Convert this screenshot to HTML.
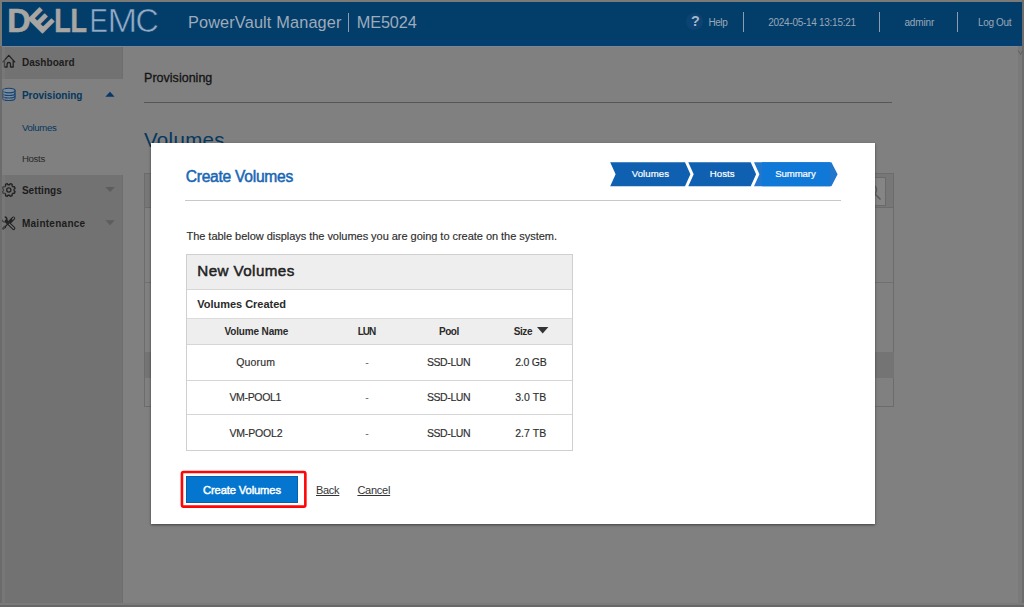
<!DOCTYPE html>
<html lang="en">
<head>
<meta charset="utf-8">
<title>PowerVault Manager - Create Volumes</title>
<style>
*{box-sizing:border-box;margin:0;padding:0}
html,body{width:1024px;height:607px;overflow:hidden;background:#808080;font-family:"Liberation Sans",sans-serif;}
body{position:relative}
.a{position:absolute}
.t{position:absolute;white-space:nowrap;line-height:1}
</style>
</head>
<body>
<!-- header bar -->
<div class="a" style="left:0;top:0;width:1024px;height:46px;background:#033e6a"></div>

<div class="a" style="left:0;top:40px;width:1024px;height:6px;background:#033f70"></div>
<!-- sidebar -->
<div class="a" style="left:0;top:46px;width:123px;height:561px;background:#727272"></div>
<div class="a" style="left:0;top:79px;width:123px;height:96px;background:#808080"></div>
<div class="a" style="left:122px;top:46px;width:1px;height:33px;background:#6e6e6e"></div>
<div class="a" style="left:122px;top:175px;width:1px;height:432px;background:#6e6e6e"></div>

<!-- page content behind the dialog -->
<div class="a" style="left:144px;top:102px;width:748px;height:1px;background:#565656"></div>
<div class="a" style="left:144px;top:173px;width:750px;height:234px;border:1px solid #6c6c6c"></div>
<div class="a" style="left:145px;top:174px;width:748px;height:34px;background:#777;border-bottom:1px solid #6c6c6c"></div>
<div class="a" style="left:145px;top:282px;width:748px;height:1px;background:#707070"></div>
<div class="a" style="left:145px;top:352px;width:749px;height:26px;background:#747474"></div>
<div class="a" style="left:858px;top:177px;width:28px;height:29px;background:#858585;border:1px solid #6a6a6a"></div>
<svg class="a" style="left:862px;top:181px" width="22" height="22" viewBox="0 0 22 22"><circle cx="9" cy="9" r="5.5" fill="none" stroke="#5c5c5c" stroke-width="1.4"/><path d="M13 13 L18.5 18.5" stroke="#5c5c5c" stroke-width="1.6"/></svg>

<!-- logo -->
<svg class="a" style="left:0;top:0" width="170" height="46" viewBox="0 0 170 46" font-family="Liberation Sans, sans-serif">
 <text font-weight="bold" font-size="32.4" fill="#a8a6a3" stroke="#a8a6a3" stroke-width="0.6"><tspan x="7.3" y="32">D</tspan><tspan x="41.1" y="34.0" rotate="-45" font-size="28.3" stroke-width="1.4">E</tspan><tspan x="54.3" y="32" rotate="0" textLength="16.43" lengthAdjust="spacingAndGlyphs">L</tspan><tspan x="70.6" y="32" textLength="16.43" lengthAdjust="spacingAndGlyphs">L</tspan></text>
 <text font-size="33.6" fill="#94abc7" stroke="#033e6a" stroke-width="0.6"><tspan x="89.4" y="32.3" textLength="18.38" lengthAdjust="spacingAndGlyphs">E</tspan><tspan x="107.6" y="32.3" textLength="29.67" lengthAdjust="spacingAndGlyphs">M</tspan><tspan x="135.6" y="32.3" textLength="23.29" lengthAdjust="spacingAndGlyphs">C</tspan></text>
</svg>
<!-- header dividers and help badge -->
<div class="a" style="left:348px;top:13px;width:1px;height:19px;background:#8d9cae"></div>
<div class="a" style="left:743px;top:12px;width:1px;height:20px;background:#8d9cae"></div>
<div class="a" style="left:879px;top:12px;width:1px;height:20px;background:#8d9cae"></div>
<div class="a" style="left:957px;top:12px;width:1px;height:20px;background:#8d9cae"></div>
<div class="a" style="left:686px;top:13px;width:17px;height:17px;border-radius:50%;background:#0d4373"></div>
<!-- sidebar icons -->
<svg class="a" style="left:0;top:46px" width="123" height="200" viewBox="0 46 123 200" fill="none" stroke-linecap="round" stroke-linejoin="round">
  <g stroke="#222" stroke-width="1.3">
    <path d="M2.9 61.9 L8.8 55.4 L14.7 61.9"/>
    <path d="M4.4 60.8 V67 H7.1 V64.2 a1.7 1.7 0 0 1 3.4 0 V67 H13.2 V60.8"/>
  </g>
  <g stroke="#174572" stroke-width="1.15" fill="#7f8c9d">
    <path d="M2.6 90.6 V98.2 a6.2 2.3 0 0 0 12.4 0 V90.6"/>
    <ellipse cx="8.8" cy="90.6" rx="6.2" ry="2.3"/>
    <path d="M2.6 93.2 a6.2 2.3 0 0 0 12.4 0" fill="none"/>
    <path d="M2.6 95.7 a6.2 2.3 0 0 0 12.4 0" fill="none"/>
  </g>
  <polygon points="105.4,96.7 114.6,96.7 110,91.8" fill="#06376a" stroke="none"/>
  <g stroke="#222" stroke-width="1.3">
    <path d="M15.12 191.52 L14.34 193.40 L13.04 193.18 L11.98 194.24 L12.20 195.54 L10.32 196.32 L9.55 195.25 L8.05 195.25 L7.28 196.32 L5.40 195.54 L5.62 194.24 L4.56 193.18 L3.26 193.40 L2.48 191.52 L3.55 190.75 L3.55 189.25 L2.48 188.48 L3.26 186.60 L4.56 186.82 L5.62 185.76 L5.40 184.46 L7.28 183.68 L8.05 184.75 L9.55 184.75 L10.32 183.68 L12.20 184.46 L11.98 185.76 L13.04 186.82 L14.34 186.60 L15.12 188.48 L14.05 189.25 L14.05 190.75 Z"/>
    <circle cx="8.8" cy="190" r="2.1"/>
  </g>
  <polygon points="105.4,187 114.8,187 110.1,192" fill="#5d5d5d" stroke="none"/>
  <g stroke="#242424">
    <path d="M7.4 222.2 L13.6 228.3" stroke-width="3.5"/>
    <path d="M7.4 222.2 L13.6 228.3" stroke="#747474" stroke-width="1.2"/>
    <path d="M5.1 217.0 A2.5 2.5 0 1 1 2.0 220.1" stroke-width="1.5"/>
    <path d="M6.0 221.0 L7.2 222.2" stroke-width="2.6"/>
    <path d="M13.4 218.3 L10.3 221.4" stroke-width="3.6"/>
    <path d="M13.7 218.0 L12.6 219.1" stroke="#7a7a7a" stroke-width="1.1"/>
    <path d="M9.6 222.2 L4.2 227.6" stroke-width="1.3"/>
    <path d="M4.4 226.2 L5.6 227.4 L3.2 229.3 L2.5 228.6 Z" fill="#242424" stroke-width="1.1"/>
  </g>
  <polygon points="105.4,220.2 114.8,220.2 110.1,225.2" fill="#5d5d5d" stroke="none"/>
</svg>

<div class="a" style="left:2px;top:46px;width:1020px;height:1px;background:#7f8792"></div>
<div class="t" style="left:187.9px;top:14px;font-size:16.3px;color:#9eabbb;letter-spacing:0.162px;">PowerVault Manager</div>
<div class="t" style="left:356.8px;top:14px;font-size:16.3px;color:#9eabbb;letter-spacing:-0.151px;">ME5024</div>
<div class="t" style="left:691.0px;top:14px;font-size:14.3px;font-weight:bold;color:#a9b7c8;letter-spacing:0.000px;">?</div>
<div class="t" style="left:708.5px;top:18px;font-size:10px;color:#99a7b7;letter-spacing:-0.459px;">Help</div>
<div class="t" style="left:768.3px;top:18px;font-size:10px;color:#99a7b7;letter-spacing:-0.287px;">2024-05-14 13:15:21</div>
<div class="t" style="left:904.4px;top:18px;font-size:10px;color:#99a7b7;letter-spacing:-0.136px;">adminr</div>
<div class="t" style="left:978.0px;top:18px;font-size:10px;color:#99a7b7;letter-spacing:-0.349px;">Log Out</div>
<div class="t" style="left:21.9px;top:58px;font-size:10px;font-weight:bold;color:#1c1c1c;letter-spacing:0.046px;">Dashboard</div>
<div class="t" style="left:21.9px;top:91px;font-size:10px;font-weight:bold;color:#05375f;letter-spacing:-0.006px;">Provisioning</div>
<div class="t" style="left:21.9px;top:123px;font-size:9.6px;color:#05375f;letter-spacing:-0.316px;">Volumes</div>
<div class="t" style="left:21.9px;top:154px;font-size:9.6px;color:#2a2a2a;letter-spacing:-0.283px;">Hosts</div>
<div class="t" style="left:21.9px;top:186px;font-size:10px;font-weight:bold;color:#1c1c1c;letter-spacing:0.064px;">Settings</div>
<div class="t" style="left:21.9px;top:219px;font-size:10px;font-weight:bold;color:#1c1c1c;letter-spacing:0.272px;">Maintenance</div>
<div class="t" style="left:144.1px;top:72px;font-size:12.5px;color:#141414;letter-spacing:0.010px;-webkit-text-stroke:0.3px #141414;">Provisioning</div>
<div class="t" style="left:144.0px;top:130px;font-size:20.5px;color:#05375f;letter-spacing:0.327px;">Volumes</div>

<!-- dialog -->
<div class="a" style="left:151px;top:143px;width:724px;height:381px;background:#fff;box-shadow:0 1px 2.5px rgba(0,0,0,.5)"></div>
<div class="a" style="left:185px;top:200px;width:656px;height:1px;background:#c8c8c8"></div>

<!-- wizard steps -->
<svg class="a" style="left:600px;top:155px" width="250" height="40" viewBox="600 155 250 40">
  <polygon points="610.2,162.2 685.0,162.2 690.4,174.3 685.0,186.3 610.2,186.3 615.6,174.3" fill="#0f60b0"/>
  <polygon points="688.3,162.2 750.7,162.2 756.1,174.3 750.7,186.3 688.3,186.3 693.7,174.3" fill="#0f60b0"/>
  <polygon points="754.0,162.2 831.4,162.2 837.6,174.3 831.4,186.3 754.0,186.3 759.4,174.3" fill="#2276cc"/>
  <polygon points="762,162.2 830,162.2 830,186.3 762,186.3" fill="#1079d8"/>
</svg>

<!-- table -->
<div class="a" style="left:186px;top:254px;width:387px;height:197px;border:1px solid #cfcfcf;background:#fff"></div>
<div class="a" style="left:187px;top:255px;width:385px;height:34px;background:#eeeeee"></div>
<div class="a" style="left:187px;top:289px;width:385px;height:1px;background:#d6d6d6"></div>
<div class="a" style="left:187px;top:318px;width:385px;height:27px;background:#eeeeee;border-top:1px solid #dcdcdc;border-bottom:1px solid #d6d6d6"></div>
<div class="a" style="left:187px;top:380px;width:385px;height:1px;background:#d6d6d6"></div>
<div class="a" style="left:187px;top:414px;width:385px;height:1px;background:#d6d6d6"></div>
<svg class="a" style="left:536px;top:326px" width="14" height="9" viewBox="0 0 14 9"><polygon points="1,1 12.4,1 6.7,7.4" fill="#333"/></svg>

<!-- buttons -->
<svg class="a" style="left:176px;top:466px" width="136" height="48" viewBox="176 466 136 48"><rect x="181.95" y="472.0" width="123.4" height="34.6" rx="1.6" fill="none" stroke="#ff0505" stroke-width="2.6"/></svg>
<div class="a" style="left:186px;top:476px;width:112px;height:27px;background:#0476cf;border:1px solid #0760a8"></div>


<div class="t" style="left:185.7px;top:169px;font-size:15.6px;color:#1866b4;letter-spacing:-0.258px;-webkit-text-stroke:0.5px #1866b4;">Create Volumes</div>
<div class="t" style="left:186.5px;top:231px;font-size:11px;color:#2e2e2e;letter-spacing:-0.034px;-webkit-text-stroke:0.15px #2e2e2e;">The table below displays the volumes you are going to create on the system.</div>
<div class="t" style="left:197.3px;top:263px;font-size:15.2px;color:#222;letter-spacing:0.414px;-webkit-text-stroke:0.5px #222;">New Volumes</div>
<div class="t" style="left:197.3px;top:299px;font-size:11px;font-weight:bold;color:#2a2a2a;letter-spacing:-0.026px;">Volumes Created</div>
<div class="t" style="left:224.4px;top:327px;font-size:10px;font-weight:bold;color:#2a2a2a;letter-spacing:-0.139px;">Volume Name</div>
<div class="t" style="left:357.8px;top:327px;font-size:10px;font-weight:bold;color:#2a2a2a;letter-spacing:-1.031px;">LUN</div>
<div class="t" style="left:439.0px;top:327px;font-size:10px;font-weight:bold;color:#2a2a2a;letter-spacing:-0.457px;">Pool</div>
<div class="t" style="left:513.8px;top:327px;font-size:10px;font-weight:bold;color:#2a2a2a;letter-spacing:-0.439px;">Size</div>
<div class="t" style="left:236.3px;top:357px;font-size:10.5px;color:#2e2e2e;letter-spacing:0.152px;-webkit-text-stroke:0.15px #2e2e2e;">Quorum</div>
<div class="t" style="left:365.2px;top:357px;font-size:10.5px;color:#666;letter-spacing:0.000px;">-</div>
<div class="t" style="left:426.9px;top:357px;font-size:10.5px;color:#2e2e2e;letter-spacing:-0.399px;-webkit-text-stroke:0.15px #2e2e2e;">SSD-LUN</div>
<div class="t" style="left:515.2px;top:357px;font-size:10.5px;color:#2e2e2e;letter-spacing:-0.218px;-webkit-text-stroke:0.15px #2e2e2e;">2.0 GB</div>
<div class="t" style="left:229.4px;top:392px;font-size:10.5px;color:#2e2e2e;letter-spacing:-0.324px;-webkit-text-stroke:0.15px #2e2e2e;">VM-POOL1</div>
<div class="t" style="left:365.2px;top:392px;font-size:10.5px;color:#666;letter-spacing:0.000px;">-</div>
<div class="t" style="left:426.9px;top:392px;font-size:10.5px;color:#2e2e2e;letter-spacing:-0.399px;-webkit-text-stroke:0.15px #2e2e2e;">SSD-LUN</div>
<div class="t" style="left:515.2px;top:392px;font-size:10.5px;color:#2e2e2e;letter-spacing:0.050px;-webkit-text-stroke:0.15px #2e2e2e;">3.0 TB</div>
<div class="t" style="left:229.4px;top:428px;font-size:10.5px;color:#2e2e2e;letter-spacing:-0.167px;-webkit-text-stroke:0.15px #2e2e2e;">VM-POOL2</div>
<div class="t" style="left:365.2px;top:428px;font-size:10.5px;color:#666;letter-spacing:0.000px;">-</div>
<div class="t" style="left:426.9px;top:428px;font-size:10.5px;color:#2e2e2e;letter-spacing:-0.399px;-webkit-text-stroke:0.15px #2e2e2e;">SSD-LUN</div>
<div class="t" style="left:515.2px;top:428px;font-size:10.5px;color:#2e2e2e;letter-spacing:0.050px;-webkit-text-stroke:0.15px #2e2e2e;">2.7 TB</div>
<div class="t" style="left:203.0px;top:485px;font-size:11.2px;color:#fff;letter-spacing:-0.124px;-webkit-text-stroke:0.45px #fff;">Create Volumes</div>
<div class="t" style="left:316.0px;top:485px;font-size:11px;color:#333;letter-spacing:-0.290px;text-decoration:underline;">Back</div>
<div class="t" style="left:357.4px;top:485px;font-size:11px;color:#333;letter-spacing:-0.250px;text-decoration:underline;">Cancel</div>
<div class="t" style="left:631.7px;top:169px;font-size:9.6px;color:#fff;letter-spacing:0.084px;-webkit-text-stroke:0.2px #fff;">Volumes</div>
<div class="t" style="left:709.7px;top:169px;font-size:9.6px;color:#fff;letter-spacing:0.092px;-webkit-text-stroke:0.2px #fff;">Hosts</div>
<div class="t" style="left:775.2px;top:169px;font-size:9.6px;color:#fff;letter-spacing:-0.074px;-webkit-text-stroke:0.2px #fff;">Summary</div>

<!-- screenshot frame -->
<div class="a" style="left:0;top:0;width:1024px;height:2px;background:#7c7a76"></div>
<div class="a" style="left:0;top:0;width:2px;height:46px;background:#7b7976"></div>
<div class="a" style="left:0;top:46px;width:2px;height:561px;background:#6b6b6b"></div>
<div class="a" style="left:2px;top:46px;width:3px;height:557px;background:rgba(128,128,128,.35)"></div>
<div class="a" style="left:1018px;top:46px;width:4px;height:561px;background:#7a7a7a"></div>
<div class="a" style="left:1022px;top:0;width:2px;height:607px;background:#6c6c6c"></div>
<svg class="a" style="left:1017px;top:49px" width="7" height="8" viewBox="0 0 7 8"><path d="M1.2 1.5 L3.6 5.5 L5.6 1.5" fill="none" stroke="#5f5f5f" stroke-width="1"/></svg>
<div class="a" style="left:0;top:603px;width:1024px;height:2px;background:#7a7a7a"></div>
<div class="a" style="left:0;top:605px;width:1024px;height:2px;background:#676767"></div>
</body>
</html>
